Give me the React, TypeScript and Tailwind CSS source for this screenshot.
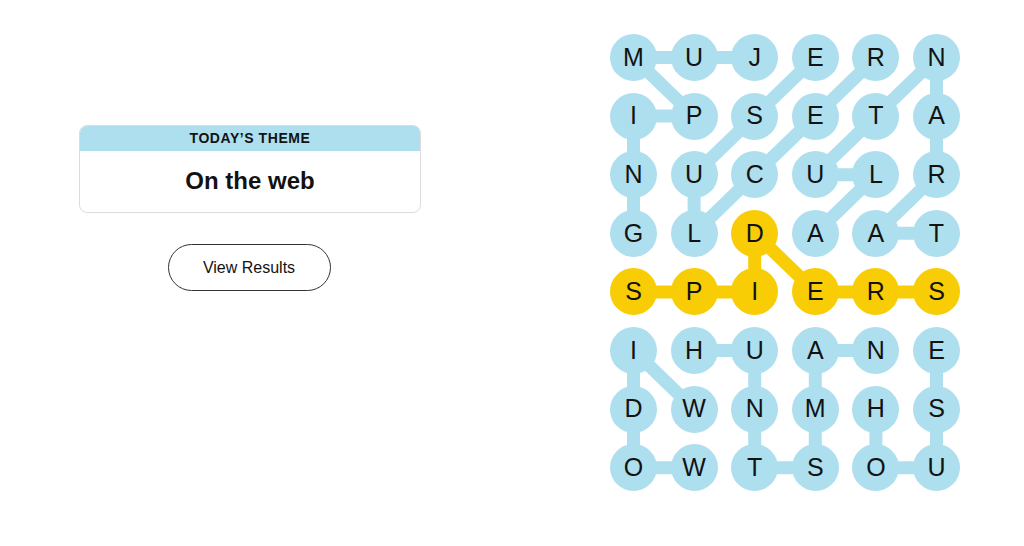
import React from 'react'

const LETTERS = [
  'MUJERN',
  'IPSETA',
  'NUCULR',
  'GLDAAT',
  'SPIERS',
  'IHUANE',
  'DWNMHS',
  'OWTSOU',
]

// cells are [col, row]
const WORDS: { path: [number, number][]; spangram?: boolean }[] = [
  { path: [[2, 0], [1, 0], [0, 0], [1, 1], [0, 1], [0, 2], [0, 3]] },
  { path: [[4, 0], [3, 1], [2, 2], [1, 3], [1, 2], [2, 1], [3, 0]] },
  { path: [[5, 3], [4, 3], [5, 2], [5, 1], [5, 0], [4, 1], [3, 2], [4, 2], [3, 3]] },
  { path: [[0, 4], [1, 4], [2, 4], [2, 3], [3, 4], [4, 4], [5, 4]], spangram: true },
  { path: [[1, 6], [0, 5], [0, 6], [0, 7], [1, 7]] },
  { path: [[1, 5], [2, 5], [2, 6], [2, 7], [3, 7], [3, 6], [3, 5], [4, 5]] },
  { path: [[4, 6], [4, 7], [5, 7], [5, 6], [5, 5]] },
]

const SIZE = 47
const PITCH_X = 60.6
const PITCH_Y = 58.6
const BLUE = '#aedfee'
const YELLOW = '#f8cd05'

function Board() {
  const spangramCells = new Set(
    WORDS.filter((w) => w.spangram).flatMap((w) => w.path.map(([c, r]) => `${c}-${r}`)),
  )

  return (
    <div className="relative h-[457px] w-[350px]">
      <svg className="absolute inset-0" width="350" height="457">
        {WORDS.map((word, wi) =>
          word.path.slice(1).map(([c, r], i) => {
            const [pc, pr] = word.path[i]
            return (
              <line
                key={`${wi}-${i}`}
                x1={SIZE / 2 + pc * PITCH_X}
                y1={SIZE / 2 + pr * PITCH_Y}
                x2={SIZE / 2 + c * PITCH_X}
                y2={SIZE / 2 + r * PITCH_Y}
                stroke={word.spangram ? YELLOW : BLUE}
                strokeWidth={13}
              />
            )
          }),
        )}
      </svg>
      <div className="relative grid grid-cols-[repeat(6,47px)] gap-x-[13.6px] gap-y-[11.6px]">
        {LETTERS.map((row, r) =>
          row.split('').map((letter, c) => (
            <div
              key={`${r}-${c}`}
              className={`flex h-[47px] w-[47px] items-center justify-center rounded-full text-[25px] text-[#121212] ${
                spangramCells.has(`${c}-${r}`) ? 'bg-[#f8cd05]' : 'bg-[#aedfee]'
              }`}
            >
              {letter}
            </div>
          )),
        )}
      </div>
    </div>
  )
}

export default function App() {
  return (
    <div className="flex h-[546px] w-[1024px] bg-white font-['Liberation_Sans',Arial,sans-serif] text-[#121212]">
      <div className="ml-[79px] mt-[125px] flex w-[342px] flex-col items-center">
        <div className="w-full overflow-hidden rounded-[8px] border border-[#dcdcdc]">
          <div className="flex h-[25px] items-center justify-center bg-[#aedfee] text-[14px] font-bold tracking-[0.04em]">
            TODAY’S THEME
          </div>
          <div className="flex h-[61px] items-center justify-center pb-[2px] text-[24px] font-bold">
            On the web
          </div>
        </div>
        <button
          type="button"
          className="mr-[2px] mt-[31px] h-[47px] w-[163px] rounded-full border border-[#333] text-[16px]"
        >
          View Results
        </button>
      </div>
      <div className="ml-[189px] mt-[34px]">
        <Board />
      </div>
    </div>
  )
}
